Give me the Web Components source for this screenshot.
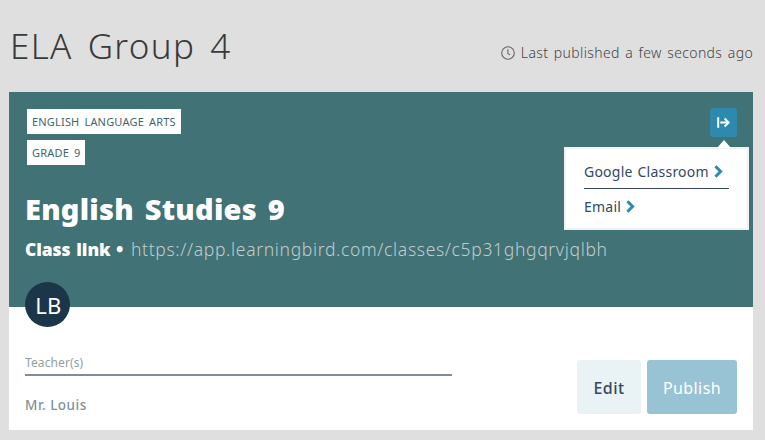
<!DOCTYPE html>
<html lang="en">
<head>
<meta charset="utf-8">
<title>ELA Group 4</title>
<style>
  body {
    margin: 0;
    background: #dfdfdf;
    font-family: "Noto Sans", Lato, sans-serif;
  }
</style>
</head>
<body>
<class-page></class-page>

<script>
const define = (name, html) => {
  const template = document.createElement('template');
  template.innerHTML = html;
  window.customElements.define(name, class extends HTMLElement {
    constructor() {
      super();
      this.attachShadow({ mode: 'open' });
      this.shadowRoot.appendChild(template.content.cloneNode(true));
    }
  });
};

define('page-header', `
<style>
  :host {
    display: flex;
    justify-content: space-between;
    height: 92px;
    padding: 0 3px 0 1px;
    box-sizing: border-box;
    white-space: nowrap;
  }
  h1 {
    margin: 25px 0 0;
    font-size: 35px;
    line-height: 42px;
    font-weight: 300;
    letter-spacing: 1.35px;
    word-spacing: 4.5px;
    color: #3a3a3a;
  }
  .published {
    display: flex;
    gap: 6px;
    margin-top: 44px;
    height: 18px;
    font-size: 14px;
    line-height: 18px;
    font-weight: 300;
    letter-spacing: .36px;
    word-spacing: 1.5px;
    color: #444;
  }
  svg { margin-top: 2px; }
</style>
<h1><slot></slot></h1>
<div class="published">
  <svg width="14" height="14" viewBox="0 0 14 14" fill="none" stroke="#666" stroke-width="1.1">
    <circle cx="7" cy="7" r="6.3"/>
    <path d="M6.9 3.2v4.2l2.1 1.5"/>
  </svg>
  <span><slot name="published"></slot></span>
</div>
`);

define('class-tag', `
<style>
  :host {
    display: block;
    width: fit-content;
    height: 25px;
    padding: 0 5px;
    background: #fff;
    color: #41656c;
    font-size: 11px;
    line-height: 26px;
    letter-spacing: .18px;
    word-spacing: 2px;
    white-space: nowrap;
  }
</style>
<slot></slot>
`);

define('share-item', `
<style>
  :host {
    display: flex;
    align-items: center;
    gap: 5px;
    height: 34px;
    color: #2f4a61;
    font-size: 14px;
    letter-spacing: .23px;
    word-spacing: 1px;
    white-space: nowrap;
  }
  :host(:not(:last-of-type)) { border-bottom: 1px solid #34495e; }
</style>
<slot></slot>
<svg width="9" height="13" viewBox="0 0 9 13" fill="none" stroke="#2d8aae" stroke-width="3">
  <path d="M1.4 1.2 6.6 6.5 1.4 11.8"/>
</svg>
`);

define('share-menu', `
<style>
  :host {
    position: relative;
    display: block;
    width: 27px;
    height: 29px;
  }
  button {
    display: flex;
    align-items: center;
    justify-content: center;
    width: 27px;
    height: 29px;
    padding: 0;
    border: 0;
    border-radius: 3px;
    background: #2d8aae;
  }
  .popover {
    position: absolute;
    top: 39px;
    right: -12px;
    width: 185px;
    height: 83px;
    box-sizing: border-box;
    padding: 5px 18px 0;
    border: 2px solid #f1f1f1;
    background: #fff;
  }
  .popover::before {
    content: '';
    position: absolute;
    top: -9px;
    right: 16px;
    border: 7px solid transparent;
    border-top: 0;
    border-bottom: 8px solid #fff;
  }
</style>
<button aria-label="Share class">
  <svg width="13" height="11" viewBox="0 0 13 11" fill="none" stroke="#fff" stroke-width="2">
    <path d="M1.2.3v10.4M3.3 5.5h8M7.6 1.5l4 4-4 4"/>
  </svg>
</button>
<div class="popover"><slot></slot></div>
`);

define('class-banner', `
<style>
  :host {
    display: flex;
    justify-content: space-between;
    height: 215px;
    padding: 16px;
    box-sizing: border-box;
    background: #417275;
    color: #fff;
  }
  .tags {
    display: grid;
    gap: 6px;
    margin: 1px 0 0 2px;
  }
  h2 {
    margin: 25px 0 0;
    font-size: 29px;
    line-height: 38px;
    font-weight: 900;
    letter-spacing: .25px;
    word-spacing: 3px;
  }
  .link {
    display: flex;
    gap: 8px;
    margin-top: 9px;
    font-size: 17.5px;
    line-height: 24px;
    white-space: nowrap;
  }
  b {
    font-weight: 900;
    letter-spacing: -.1px;
    word-spacing: 1.3px;
  }
  .url {
    font-weight: 300;
    letter-spacing: .67px;
    color: #c3cccd;
  }
</style>
<div>
  <div class="tags"><slot name="tag"></slot></div>
  <h2><slot></slot></h2>
  <div class="link"><b>Class link •</b><span class="url"><slot name="url"></slot></span></div>
</div>
<slot name="share"></slot>
`);

define('user-avatar', `
<style>
  :host {
    display: block;
    width: 45px;
    height: 45px;
    padding-left: 2px;
    box-sizing: border-box;
    border-radius: 50%;
    background: #1b3549;
    color: #fff;
    font-size: 22px;
    line-height: 46px;
    letter-spacing: .3px;
    text-align: center;
  }
</style>
<slot></slot>
`);

define('teacher-list', `
<style>
  :host {
    display: block;
    width: 427px;
    color: #7f9297;
    font-size: 13.5px;
    line-height: 18px;
    font-weight: 500;
    letter-spacing: .5px;
  }
  .label {
    height: 20px;
    padding-top: 1px;
    margin-bottom: 20px;
    border-bottom: 2px solid #7c8f96;
    font-size: 12px;
    font-weight: 400;
    letter-spacing: .1px;
    color: #8fa2a5;
  }
</style>
<div class="label">Teacher(s)</div>
<slot></slot>
`);

define('action-button', `
<style>
  :host { display: block; }
  button {
    width: 64px;
    height: 54px;
    padding: 2px 0 0;
    border: 0;
    border-radius: 3px;
    background: #e9f2f5;
    color: #34495e;
    font: 500 16px "Noto Sans", sans-serif;
    letter-spacing: .4px;
  }
  :host([primary]) button {
    width: 90px;
    background: #97c3d4;
    color: #fff;
    font-weight: 400;
  }
</style>
<button><slot></slot></button>
`);

define('class-card', `
<style>
  :host {
    display: block;
    height: 338px;
    background: #fff;
  }
  .body { padding: 0 16px; }
  ::slotted(user-avatar) { margin-top: -25px; }
  .row {
    display: flex;
    justify-content: space-between;
    margin-top: 26px;
  }
  .actions {
    display: flex;
    gap: 6px;
    margin-top: 7px;
  }
</style>
<slot name="banner"></slot>
<div class="body">
  <slot name="avatar"></slot>
  <div class="row">
    <slot></slot>
    <div class="actions"><slot name="action"></slot></div>
  </div>
</div>
`);

define('class-page', `
<style>
  :host {
    display: block;
    height: 440px;
    box-sizing: border-box;
    padding: 0 12px 0 9px;
  }
  page-header { margin-right: -3px; }
</style>
<page-header>ELA Group 4<span slot="published">Last published a few seconds ago</span></page-header>
<class-card>
  <class-banner slot="banner">English Studies 9<class-tag slot="tag">ENGLISH LANGUAGE ARTS</class-tag><class-tag slot="tag">GRADE 9</class-tag><span slot="url">https://app.learningbird.com/classes/c5p31ghgqrvjqlbh</span>
    <share-menu slot="share">
      <share-item>Google Classroom</share-item>
      <share-item>Email</share-item>
    </share-menu>
  </class-banner>
  <user-avatar slot="avatar">LB</user-avatar>
  <teacher-list>Mr. Louis</teacher-list>
  <action-button slot="action">Edit</action-button>
  <action-button slot="action" primary>Publish</action-button>
</class-card>
`);
</script>
</body>
</html>
